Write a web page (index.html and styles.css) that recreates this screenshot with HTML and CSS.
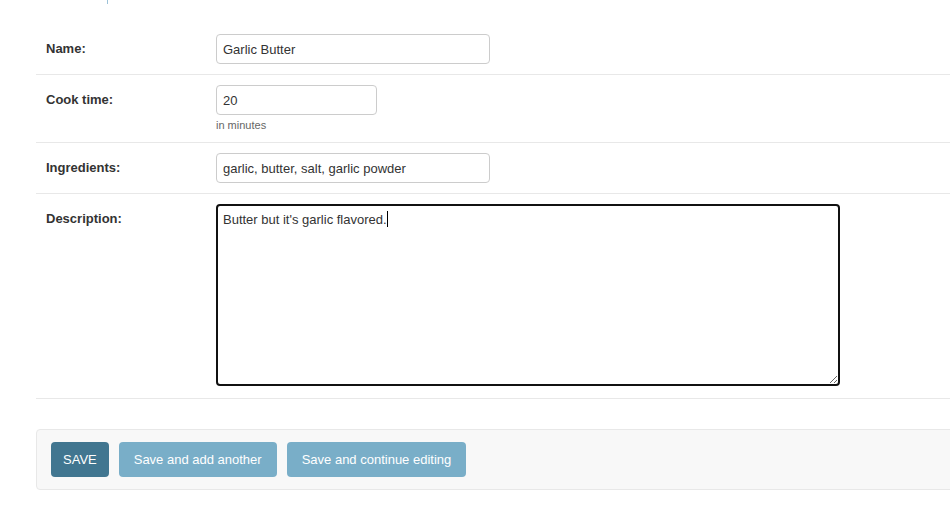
FILE: index.html
```html
<!DOCTYPE html>
<html>
<head>
<meta charset="utf-8">
<link rel="stylesheet" href="styles.css">
</head>
<body>
<div class="page">
  <div class="topmark"></div>
  <form class="form">
    <fieldset class="module">
      <div class="row">
        <label class="label">Name:</label>
        <div class="field"><input class="input wide" type="text" value="Garlic Butter"></div>
      </div>
      <div class="row">
        <label class="label">Cook time:</label>
        <div class="field">
          <input class="input short" type="text" value="20">
          <div class="help">in minutes</div>
        </div>
      </div>
      <div class="row">
        <label class="label">Ingredients:</label>
        <div class="field"><input class="input wide" type="text" value="garlic, butter, salt, garlic powder"></div>
      </div>
      <div class="row">
        <label class="label">Description:</label>
        <div class="field"><div class="textarea">Butter but it's garlic flavored.<span class="caret"></span></div></div>
      </div>
    </fieldset>
    <div class="submit-row">
      <button type="button" class="btn default">SAVE</button>
      <button type="button" class="btn">Save and add another</button>
      <button type="button" class="btn">Save and continue editing</button>
    </div>
  </form>
</div>
</body>
</html>
```

FILE: styles.css
```css
html, body {
  margin: 0;
  padding: 0;
  background: #fff;
  overflow: hidden;
}
body {
  font-family: "Liberation Sans", Arial, sans-serif;
  font-size: 13px;
  color: #333;
  width: 950px;
  height: 512px;
}
.page {
  width: 1000px;
  padding-left: 36px;
}
.topmark {
  width: 1px;
  height: 4px;
  background: #9cc2d8;
  margin-left: 71px;
  margin-bottom: 20px;
}
.form { margin: 0; }
.module {
  border: 0;
  margin: 0;
  padding: 0;
}
.row {
  display: flex;
  padding: 10px;
  border-bottom: 1px solid #e8e8e8;
}
.label {
  width: 160px;
  padding: 6px 10px 0 0;
  line-height: 18px;
  font-weight: bold;
  color: #333;
  flex: none;
}
.field { flex: none; }
.input {
  display: block;
  box-sizing: border-box;
  height: 30px;
  padding: 5px 6px;
  border: 1px solid #ccc;
  border-radius: 4px;
  font-family: inherit;
  font-size: 13px;
  color: #333;
  background: #fff;
  margin: 0;
}
.wide { width: 274px; }
.short { width: 161px; }
.help {
  font-size: 11px;
  color: #666;
  margin-top: 3px;
  line-height: 14px;
}
.textarea {
  box-sizing: border-box;
  width: 624px;
  height: 182px;
  padding: 5px 5px;
  border: 2px solid #111;
  border-radius: 4px;
  line-height: 18px;
  color: #333;
  resize: both;
  overflow: auto;
  margin-bottom: 2px;
}
.caret {
  display: inline-block;
  width: 1px;
  height: 16px;
  background: #000;
  vertical-align: -3px;
}
.submit-row {
  margin-top: 30px;
  display: flex;
  gap: 10px;
  padding: 12px 14px;
  background: #f8f8f8;
  border: 1px solid #e8e8e8;
  border-radius: 4px;
}
.btn {
  height: 35px;
  padding: 0 15px;
  border: 0;
  border-radius: 4px;
  background: #79aec8;
  color: #fff;
  font-family: inherit;
  font-size: 13px;
  line-height: 35px;
  margin: 0;
}
.btn.default {
  background: #417690;
  padding: 0 12px;
}
```
